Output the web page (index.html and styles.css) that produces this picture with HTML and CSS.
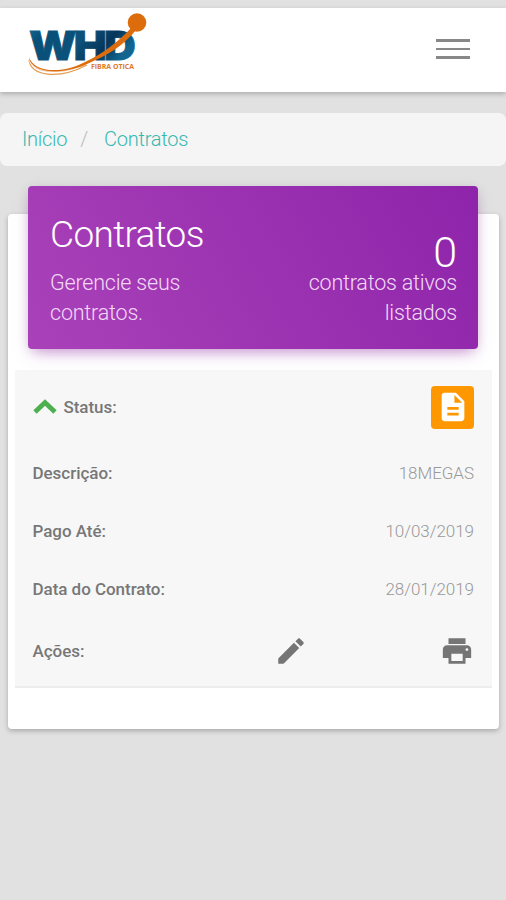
FILE: index.html
```html
<!DOCTYPE html>
<html lang="pt-BR">
<head>
<meta charset="utf-8">
<meta name="viewport" content="width=device-width, initial-scale=1">
<title>Contratos</title>
<link rel="stylesheet" href="styles.css">
</head>
<body>
<header class="topbar">
  <svg class="logo" width="122" height="68" viewBox="26 12 122 68" role="img" aria-label="WHD Fibra Ótica">
    <defs>
      <linearGradient id="blue" x1="0" y1="0" x2="1" y2="0.4">
        <stop offset="0" stop-color="#176f9a"/><stop offset=".2" stop-color="#075078"/><stop offset=".55" stop-color="#0c527a"/><stop offset=".8" stop-color="#06365a"/><stop offset="1" stop-color="#12658f"/>
      </linearGradient>
    </defs>
    <text class="logo-name" x="29" y="60" textLength="104" lengthAdjust="spacingAndGlyphs" fill="url(#blue)" stroke="url(#blue)">WHD</text>
    <path d="M29 57C33 71 58 75 83 63C104 53 117 43 132 27L136 30C123 46 108 55 87 64C60 77 30 74 29 57Z" fill="#dd6c0d"/>
    <path d="M29 60C31 76 58 80 87 65" fill="none" stroke="#e49a4e" stroke-width="1.2"/>
    <path d="M29 61C36 72 55 75 78 68" fill="none" stroke="#fff" stroke-width=".6"/>
    <circle cx="137" cy="22.5" r="9.3" fill="#dd6c0d"/>
    <text class="logo-sub" x="91" y="69" textLength="43" lengthAdjust="spacingAndGlyphs">FIBRA OTICA</text>
  </svg>
  <button class="menu" aria-label="Menu"><span></span><span></span><span></span></button>
</header>
<nav class="breadcrumb"><a>Início</a><span class="separator">/</span><a>Contratos</a></nav>
<main class="card">
  <section class="banner">
    <div class="banner-info"><h1>Contratos</h1><p>Gerencie seus contratos.</p></div>
    <div class="banner-count"><strong>0</strong><p>contratos ativos listados</p></div>
  </section>
  <section class="details">
    <div class="row row-status">
      <span class="status"><svg width="24" height="16" viewBox="0 0 24 16"><path d="M2 13L12 3.5L22 13" fill="none" stroke="#4caf50" stroke-width="4.8"/></svg><b>Status:</b></span>
      <button class="document" aria-label="Documento"><svg width="34" height="34" viewBox="0 0 24 24"><path fill="#fff" d="M14 2H6c-1.1 0-1.99.9-1.99 2L4 20c0 1.100.89 2 1.990 2H18c1.100 0 2-.9 2-2V8l-6-6zm2 16H8v-2h8v2zm0-4H8v-2h8v2zm-3-5V3.500L18.500 9H13z"/></svg></button>
    </div>
    <div class="row"><b>Descrição:</b><span>18MEGAS</span></div>
    <div class="row"><b>Pago Até:</b><span>10/03/2019</span></div>
    <div class="row"><b>Data do Contrato:</b><span>28/01/2019</span></div>
    <div class="row row-actions"><b>Ações:</b>
      <svg class="edit" width="34" height="34" viewBox="0 0 24 24"><path d="M3 17.250V21h3.750L17.810 9.940l-3.750-3.750L3 17.250zM20.710 7.040c.39-.39.39-1.020 0-1.410l-2.340-2.340c-.39-.39-1.020-.39-1.410 0l-1.830 1.830 3.750 3.750 1.830-1.830z"/></svg>
      <svg class="print" width="34" height="34" viewBox="0 0 24 24"><path d="M19 8H5c-1.660 0-3 1.340-3 3v6h4v4h12v-4h4v-6c0-1.660-1.340-3-3-3zm-3 11H8v-5h8v5zm3-7c-.55 0-1-.45-1-1s.45-1 1-1 1 .45 1 1-.45 1-1 1zm-1-9H6v4h12V3z"/></svg>
    </div>
  </section>
</main>
</body>
</html>
```
FILE: styles.css
```css
* { box-sizing: border-box; }
body {
  margin: 0;
  padding-top: 8px;
  min-height: 900px;
  background: #e1e1e1;
  font-family: Roboto, sans-serif;
  font-weight: 300;
}
h1, p { margin: 0; font-weight: 300; }
button { border: 0; padding: 0; }
.topbar {
  height: 84px;
  padding: 4px 36px 0 26px;
  display: flex;
  justify-content: space-between;
  align-items: flex-start;
  background: #fff;
  box-shadow: 0 2px 5px rgba(0, 0, 0, .24);
}
.logo-name { font: 900 40px Inter, sans-serif; letter-spacing: -2.5px; stroke-width: .8px; }
.logo-sub { font: 700 6.2px "Open Sans", sans-serif; fill: #e07a28; }
.menu {
  width: 34px;
  margin-top: 27px;
  display: grid;
  gap: 6px;
  background: none;
}
.menu span { height: 2.5px; background: #888; }
.breadcrumb {
  height: 53px;
  margin-top: 21px;
  padding: 0 22px 2px;
  display: flex;
  align-items: center;
  border-radius: 7px;
  background: #f5f5f5;
  color: #38b8b0;
  font-size: 20px;
  letter-spacing: -.25px;
}
.separator { margin: 0 16px 0 13px; color: #bbb; }
.card {
  height: 515px;
  margin: 48px 7px 0 8px;
  padding: 0 7px;
  border-radius: 4px;
  background: #fff;
  box-shadow: 0 2px 5px rgba(0, 0, 0, .25);
}
.banner {
  position: relative;
  top: -28px;
  height: 163px;
  margin: 0 14px 0 13px;
  padding: 0 21px 0 22px;
  display: flex;
  justify-content: space-between;
  border-radius: 4px;
  background: linear-gradient(60deg, #a942b9, #8e24aa);
  box-shadow: 0 7px 15px -5px rgba(156, 39, 176, .5), 0 2px 12px rgba(0, 0, 0, .08);
  color: #fff;
}
.banner p { font-size: 21.5px; line-height: 30px; letter-spacing: -.2px; color: #f4d9f7; }
.banner-info { width: 150px; padding-top: 27px; }
.banner-info h1 { margin-bottom: 11px; font-size: 37px; line-height: 44px; letter-spacing: -.65px; }
.banner-count { width: 155px; padding-top: 40px; text-align: right; }
.banner-count strong { display: block; height: 42px; font-size: 43px; font-weight: 300; line-height: 53px; }
.details {
  height: 318px;
  margin-top: -7px;
  padding: 0 18px 0 17.5px;
  border-bottom: 2px solid #ededed;
  background: #f7f7f7;
}
.row {
  height: 58px;
  display: flex;
  align-items: center;
  justify-content: space-between;
  color: #999;
  font-size: 17px;
  letter-spacing: -.04px;
}
.row b { color: #777; font-weight: 500; }
.row-status { height: 74px; }
.status { display: flex; align-items: center; gap: 7px; }
.document {
  width: 43px;
  height: 43px;
  display: grid;
  place-items: center;
  border-radius: 4px;
  background: #ff9800;
}
.row-actions { height: 66px; fill: #757575; }
.edit { margin-left: 57px; }
```
